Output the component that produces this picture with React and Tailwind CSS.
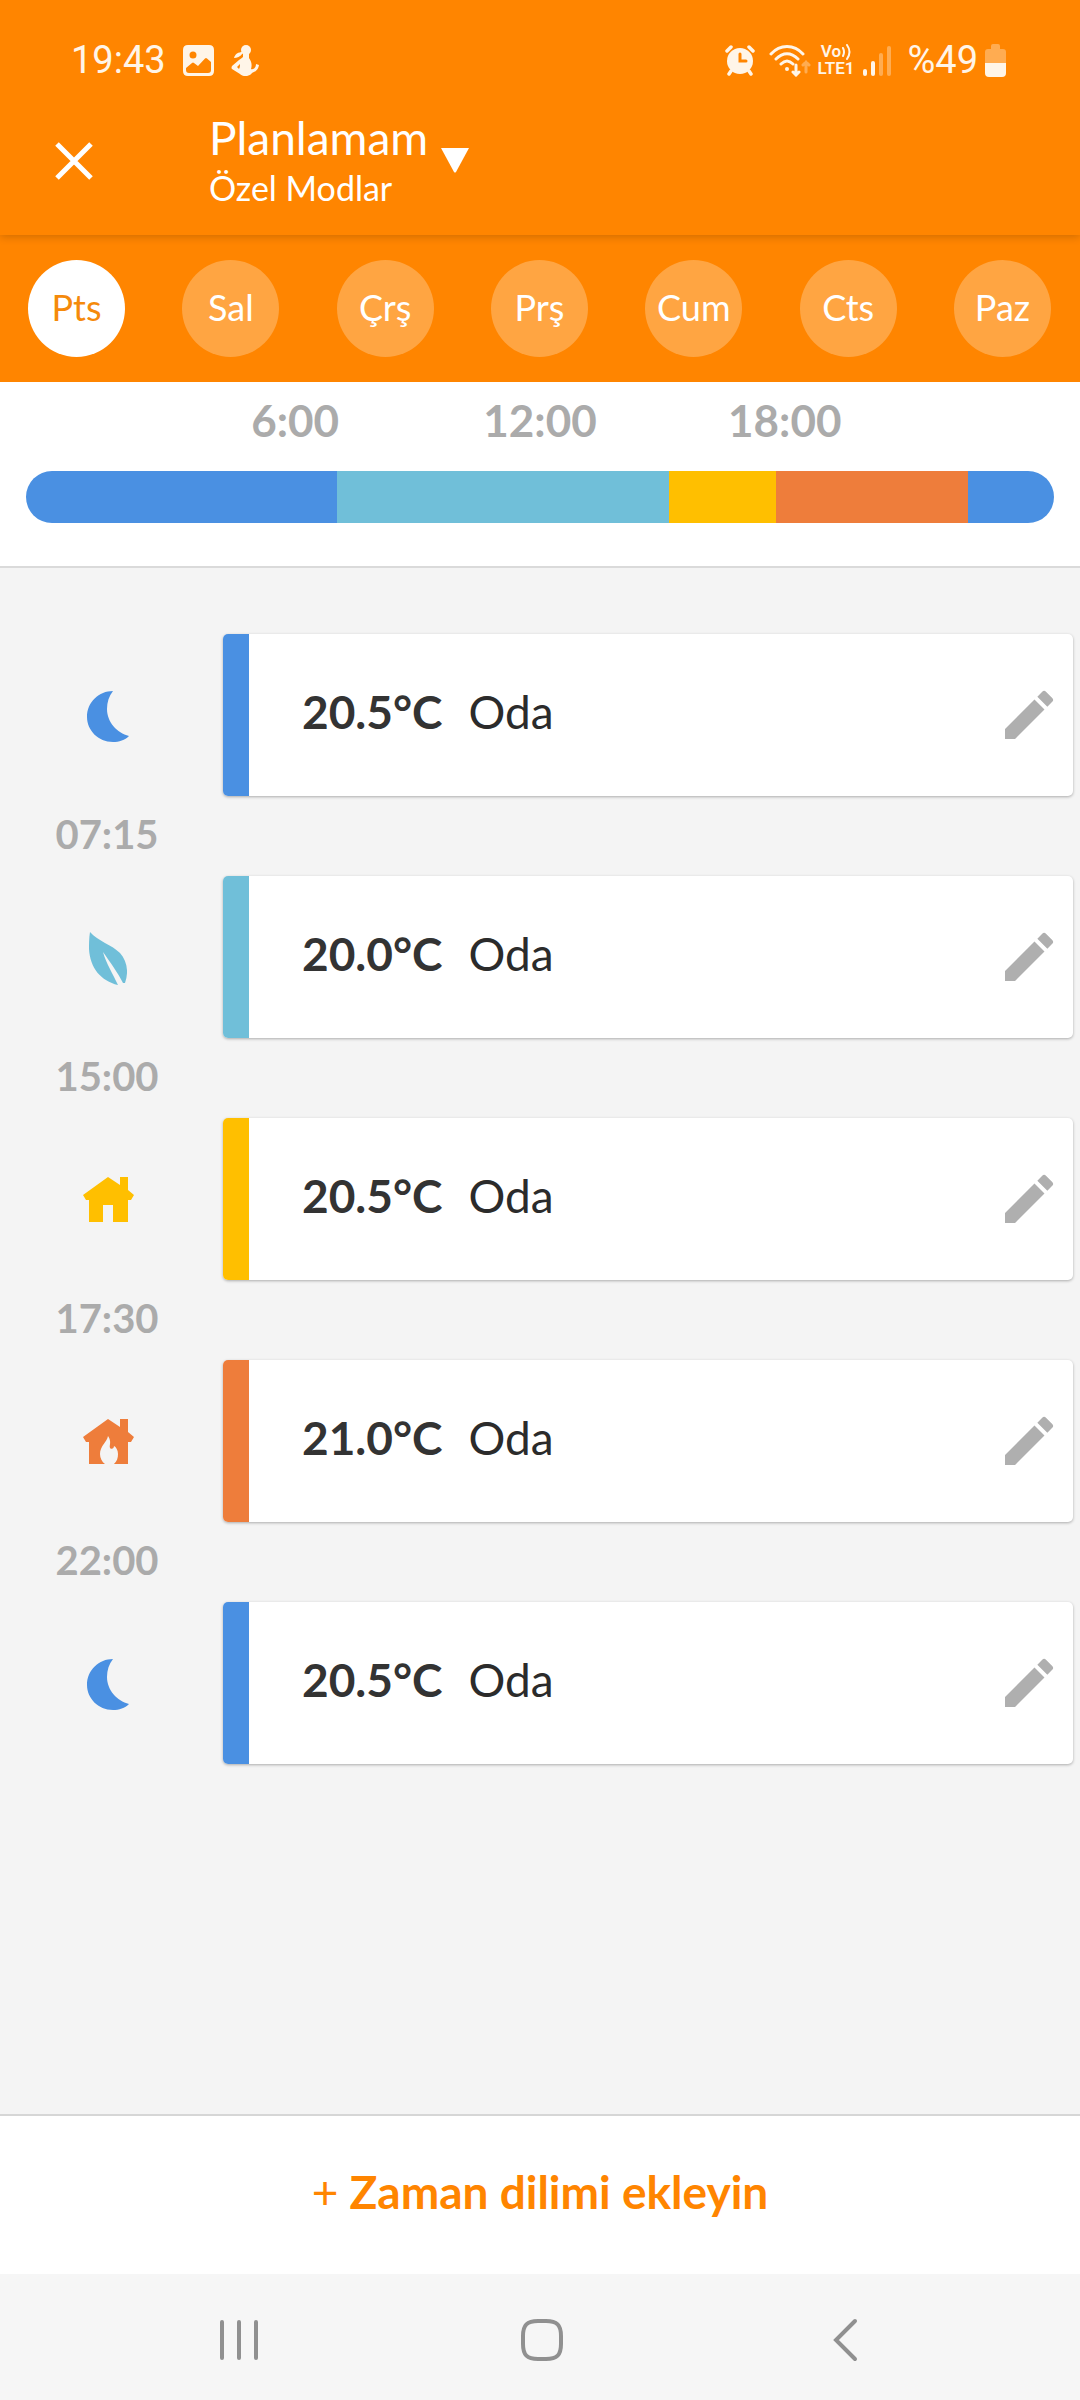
import React, { useState } from "react";
import { MdEdit } from "react-icons/md";

const DAYS = ["Pts", "Sal", "Çrş", "Prş", "Cum", "Cts", "Paz"];

const MODES = {
  night: { bg: "bg-[#4a90e2]", text: "text-[#4a90e2]", Icon: MoonIcon },
  eco: { bg: "bg-[#70bfd9]", text: "text-[#70bfd9]", Icon: LeafIcon },
  home: { bg: "bg-[#ffbf00]", text: "text-[#ffbf00]", Icon: HouseIcon },
  comfort: { bg: "bg-[#ee7d3b]", text: "text-[#ee7d3b]", Icon: FireHouseIcon },
};

const PERIODS = [
  { mode: "night", temp: "20.5°C", until: "07:15", minutes: 435 },
  { mode: "eco", temp: "20.0°C", until: "15:00", minutes: 465 },
  { mode: "home", temp: "20.5°C", until: "17:30", minutes: 150 },
  { mode: "comfort", temp: "21.0°C", until: "22:00", minutes: 270 },
  { mode: "night", temp: "20.5°C", until: null, minutes: 120 },
];

function MoonIcon() {
  return (
    <svg width="42" height="51" viewBox="0 0 42 51" fill="currentColor" aria-hidden="true">
      <path d="M26 0C12 0 0 11 0 26C0 39 11 51 26 51C32 51 38 49 42 45C30 42 20 31 20 18C20 11 22 5 26 0Z" />
    </svg>
  );
}

function LeafIcon() {
  return (
    <svg width="38" height="53" viewBox="0 0 38 53" fill="currentColor" aria-hidden="true">
      <path d="M1 0C0 6 0 12 0 17C1 36 12 49 29 53C24 42 17 31 14 20C21 30 29 41 34 51H36C40 40 38 29 31 21C23 13 9 9 1 0Z" />
    </svg>
  );
}

function HouseIcon() {
  return (
    <svg width="52" height="46" viewBox="0 0 52 46" fill="currentColor" aria-hidden="true">
      <path d="M26 0L38 8V0H46V13L52 18L49 23H46V45H31V28H21V45H7V23H4L1 18Z" />
    </svg>
  );
}

function FireHouseIcon() {
  return (
    <svg width="52" height="46" viewBox="0 0 52 46" fill="currentColor" aria-hidden="true">
      <path d="M26 0L38 8V0H46V13L52 18L49 23H46V45H32C35 42 36 39 36 35C36 31 34 28 32 27C32 29 30 31 28 29C27 26 30 23 26 17C25 23 18 27 18 35C18 39 20 43 23 45H7V23H4L1 18Z" />
    </svg>
  );
}

function GalleryIcon() {
  return (
    <svg width="31" height="31" viewBox="0 0 31 31" aria-hidden="true">
      <path
        fill="currentColor"
        fillRule="evenodd"
        d="M5 0H26Q31 0 31 5V26Q31 31 26 31H5Q0 31 0 26V5Q0 0 5 0ZM10 6.500A3.500 3.500 0 1 0 10 13.500A3.500 3.500 0 1 0 10 6.500ZM3 23V25Q3 28 6 28H25Q28 28 28 25V17L24 13.500Q23 12.500 22 13.500L15 21L11 18Q10 17 9 18Z"
      />
    </svg>
  );
}

function PersonIcon() {
  return (
    <svg width="28" height="31" viewBox="0 0 28 31" fill="currentColor" aria-hidden="true">
      <circle cx="15" cy="5" r="5" />
      <path d="M12 8C9 12 6 13 3 13C4 9 7 7 12 7Z" />
      <path
        fillRule="evenodd"
        d="M12 8H18V13C21 17 21 21 20 24C23 25 25 22 25 19L28 20C27 26 23 27 21 28C18 32 12 32 9 29L1 24Q0 23 1 21L8 15Q11 13 12 12ZM9 19L6 22L8 24C9 22 9 21 9 19Z"
      />
    </svg>
  );
}

function AlarmIcon() {
  return (
    <svg width="30" height="31" viewBox="0 0 30 31" aria-hidden="true">
      <g stroke="currentColor" strokeWidth="3.500" strokeLinecap="round">
        <path d="M2 6L6 2M28 6L24 2M6 26L4 29M24 26L26 29" />
      </g>
      <circle cx="15" cy="16" r="13" fill="currentColor" />
      <path d="M15 9V16H21" fill="none" stroke="#ff8500" strokeWidth="3" strokeLinecap="round" />
    </svg>
  );
}

function WifiIcon() {
  return (
    <svg width="42" height="33" viewBox="0 0 42 33" fill="none" stroke="currentColor" strokeLinecap="round" aria-hidden="true">
      <path strokeWidth="3" d="M2 10C11 0 25 0 34 10M7 15C14 8 22 8 29 15M12 20C16 16 20 16 24 20" />
      <circle cx="18" cy="25" r="2" fill="currentColor" stroke="none" />
      <path strokeWidth="3" d="M27 21V31M24 28L27 31L30 28" />
      <path strokeWidth="3" opacity="0.35" d="M37 28V18M34 21L37 18L40 21" />
    </svg>
  );
}

function SignalIcon() {
  return (
    <svg width="28" height="31" viewBox="0 0 28 31" fill="currentColor" aria-hidden="true">
      <rect x="0" y="24" width="4" height="7" rx="2" />
      <rect x="8" y="16" width="4" height="15" rx="2" />
      <rect x="16" y="8" width="4" height="23" rx="2" opacity="0.35" />
      <rect x="24" y="1" width="4" height="30" rx="2" opacity="0.35" />
    </svg>
  );
}

function BatteryIcon() {
  return (
    <svg width="21" height="33" viewBox="0 0 21 33" fill="currentColor" aria-hidden="true">
      <path opacity="0.35" d="M0 19V8Q0 5 3 5H6V2Q6 0 8 0H13Q15 0 15 2V5H18Q21 5 21 8V19Z" />
      <path d="M0 19H21V29Q21 33 17 33H4Q0 33 0 29Z" />
    </svg>
  );
}

function StatusBar() {
  return (
    <div className="flex h-[120px] items-center justify-between pl-[71px] pr-[74px] font-[Roboto,sans-serif] text-[#fff5e8]">
      <div className="flex items-center gap-[17px]">
        <span className="text-[38px] leading-none">19:43</span>
        <GalleryIcon />
        <PersonIcon />
      </div>
      <div className="flex items-center">
        <AlarmIcon />
        <span className="ml-[14px]"><WifiIcon /></span>
        <div className="ml-1 flex w-[41px] flex-col items-center text-[17px] font-semibold leading-[17px]">
          <span className="flex items-center">
            Vo
            <svg width="10" height="16" viewBox="0 0 10 16" fill="none" stroke="currentColor" strokeWidth="2" strokeLinecap="round" aria-hidden="true">
              <path d="M2 4Q4 8 2 12M6 1Q11 8 6 15" />
            </svg>
          </span>
          <span>LTE1</span>
        </div>
        <span className="ml-[7px]"><SignalIcon /></span>
        <span className="ml-4 text-[38px] leading-none">%49</span>
        <span className="ml-[7px]"><BatteryIcon /></span>
      </div>
    </div>
  );
}

function Header() {
  return (
    <header className="relative z-10 bg-[#ff8500] text-white shadow-[0_2px_8px_rgba(0,0,0,0.18)]">
      <StatusBar />
      <div className="flex h-[115px] pl-[54px]">
        <button type="button" aria-label="Kapat" className="mt-[21px] h-10 w-10">
          <svg width="40" height="40" viewBox="0 0 40 40" fill="none" stroke="currentColor" strokeWidth="5" aria-hidden="true">
            <path d="M3 3L37 37M37 3L3 37" />
          </svg>
        </button>
        <button type="button" className="ml-[115px] flex items-start gap-3 text-left">
          <span className="flex flex-col">
            <span className="text-[46px] leading-[36px]">Planlamam</span>
            <span className="mt-3 text-[34px] leading-[40px]">Özel Modlar</span>
          </span>
          <svg className="mt-[28px]" width="30" height="25" viewBox="0 0 30 25" fill="currentColor" aria-hidden="true">
            <path d="M1 0H29L16 24Q15 25 14 24Z" />
          </svg>
        </button>
      </div>
    </header>
  );
}

function DayPicker() {
  const [selected, setSelected] = useState("Pts");
  return (
    <nav className="flex h-[147px] items-center justify-between bg-[#ff8500] pl-7 pr-[29px]" aria-label="Günler">
      {DAYS.map((day) => (
        <button
          key={day}
          type="button"
          aria-pressed={day === selected}
          onClick={() => setSelected(day)}
          className={
            day === selected
              ? "h-[97px] w-[97px] rounded-full bg-white pb-1 text-[36px] leading-none text-[#f58a0b]"
              : "h-[97px] w-[97px] rounded-full bg-[#ffa542] pb-1 text-[36px] leading-none text-white"
          }
        >
          {day}
        </button>
      ))}
    </nav>
  );
}

function Timeline() {
  return (
    <section className="border-b-2 border-[#dadada] bg-white pb-[43px]">
      <div className="grid grid-cols-3 px-[16%] pt-4 text-center text-[44px] font-bold leading-[44px] text-[#ababab]">
        <span>6:00</span>
        <span>12:00</span>
        <span>18:00</span>
      </div>
      <div className="mx-[26px] mt-[29px] flex h-[52px] overflow-hidden rounded-full">
        {PERIODS.map((p, i) => (
          <div key={i} className={MODES[p.mode].bg} style={{ flexGrow: p.minutes }} />
        ))}
      </div>
    </section>
  );
}

function Period({ period }) {
  const { bg, text, Icon } = MODES[period.mode];
  return (
    <li>
      <div className="flex h-[162px] items-center pr-[7px]">
        <div className={`flex w-[216px] justify-center pt-[2px] ${text}`}>
          <Icon />
        </div>
        <div className="ml-[7px] flex h-full flex-1 items-center overflow-hidden rounded-[5px] bg-white shadow-[0_1px_3px_rgba(0,0,0,0.3)]">
          <div className={`h-full w-[26px] ${bg}`} />
          <div className="ml-[53px] flex gap-[26px] pb-[6px] text-[46px] leading-none text-[#2b2b2b]">
            <span className="font-bold text-[#333333]">{period.temp}</span>
            <span>Oda</span>
          </div>
          <button type="button" aria-label="Düzenle" className="ml-auto mr-[12px] text-[#afafaf]">
            <MdEdit size={64} />
          </button>
        </div>
      </div>
      {period.until && (
        <p className="w-[214px] pb-1 text-center text-[40px] font-bold leading-[76px] text-[#ababab]">{period.until}</p>
      )}
    </li>
  );
}

function NavigationBar() {
  return (
    <div className="grid h-[126px] grid-cols-3 items-center bg-[#f6f6f6] pl-[87px] pr-[84px] pt-[6px] text-[#909090]">
      <button type="button" aria-label="Son uygulamalar" className="flex justify-center">
        <svg width="40" height="42" viewBox="0 0 40 42" fill="none" stroke="currentColor" strokeWidth="4" strokeLinecap="round" aria-hidden="true">
          <path d="M3 3V39M20 3V39M37 3V39" />
        </svg>
      </button>
      <button type="button" aria-label="Ana ekran" className="flex justify-center">
        <svg width="42" height="42" viewBox="0 0 42 42" fill="none" stroke="currentColor" strokeWidth="4" aria-hidden="true">
          <path d="M21 2H25C36 2 40 6 40 17V25C40 36 36 40 25 40H17C6 40 2 36 2 25V17C2 6 6 2 17 2Z" />
        </svg>
      </button>
      <button type="button" aria-label="Geri" className="flex justify-center">
        <svg width="26" height="44" viewBox="0 0 26 44" fill="none" stroke="currentColor" strokeWidth="4" strokeLinecap="round" aria-hidden="true">
          <path d="M23 3L4 22L23 41" />
        </svg>
      </button>
    </div>
  );
}

export default function App() {
  return (
    <div className="flex min-h-screen flex-col bg-[#f4f4f4] font-[Lato,sans-serif]">
      <Header />
      <DayPicker />
      <Timeline />
      <main className="flex-1 pt-[66px]">
        <ul>
          {PERIODS.map((p, i) => (
            <Period key={i} period={p} />
          ))}
        </ul>
      </main>
      <button
        type="button"
        className="h-[160px] border-t-2 border-[#d6d6d6] bg-white pb-[6px] text-[46px] font-bold leading-none text-[#ff8500]"
      >
        <span className="font-normal">+</span> Zaman dilimi ekleyin
      </button>
      <NavigationBar />
    </div>
  );
}
